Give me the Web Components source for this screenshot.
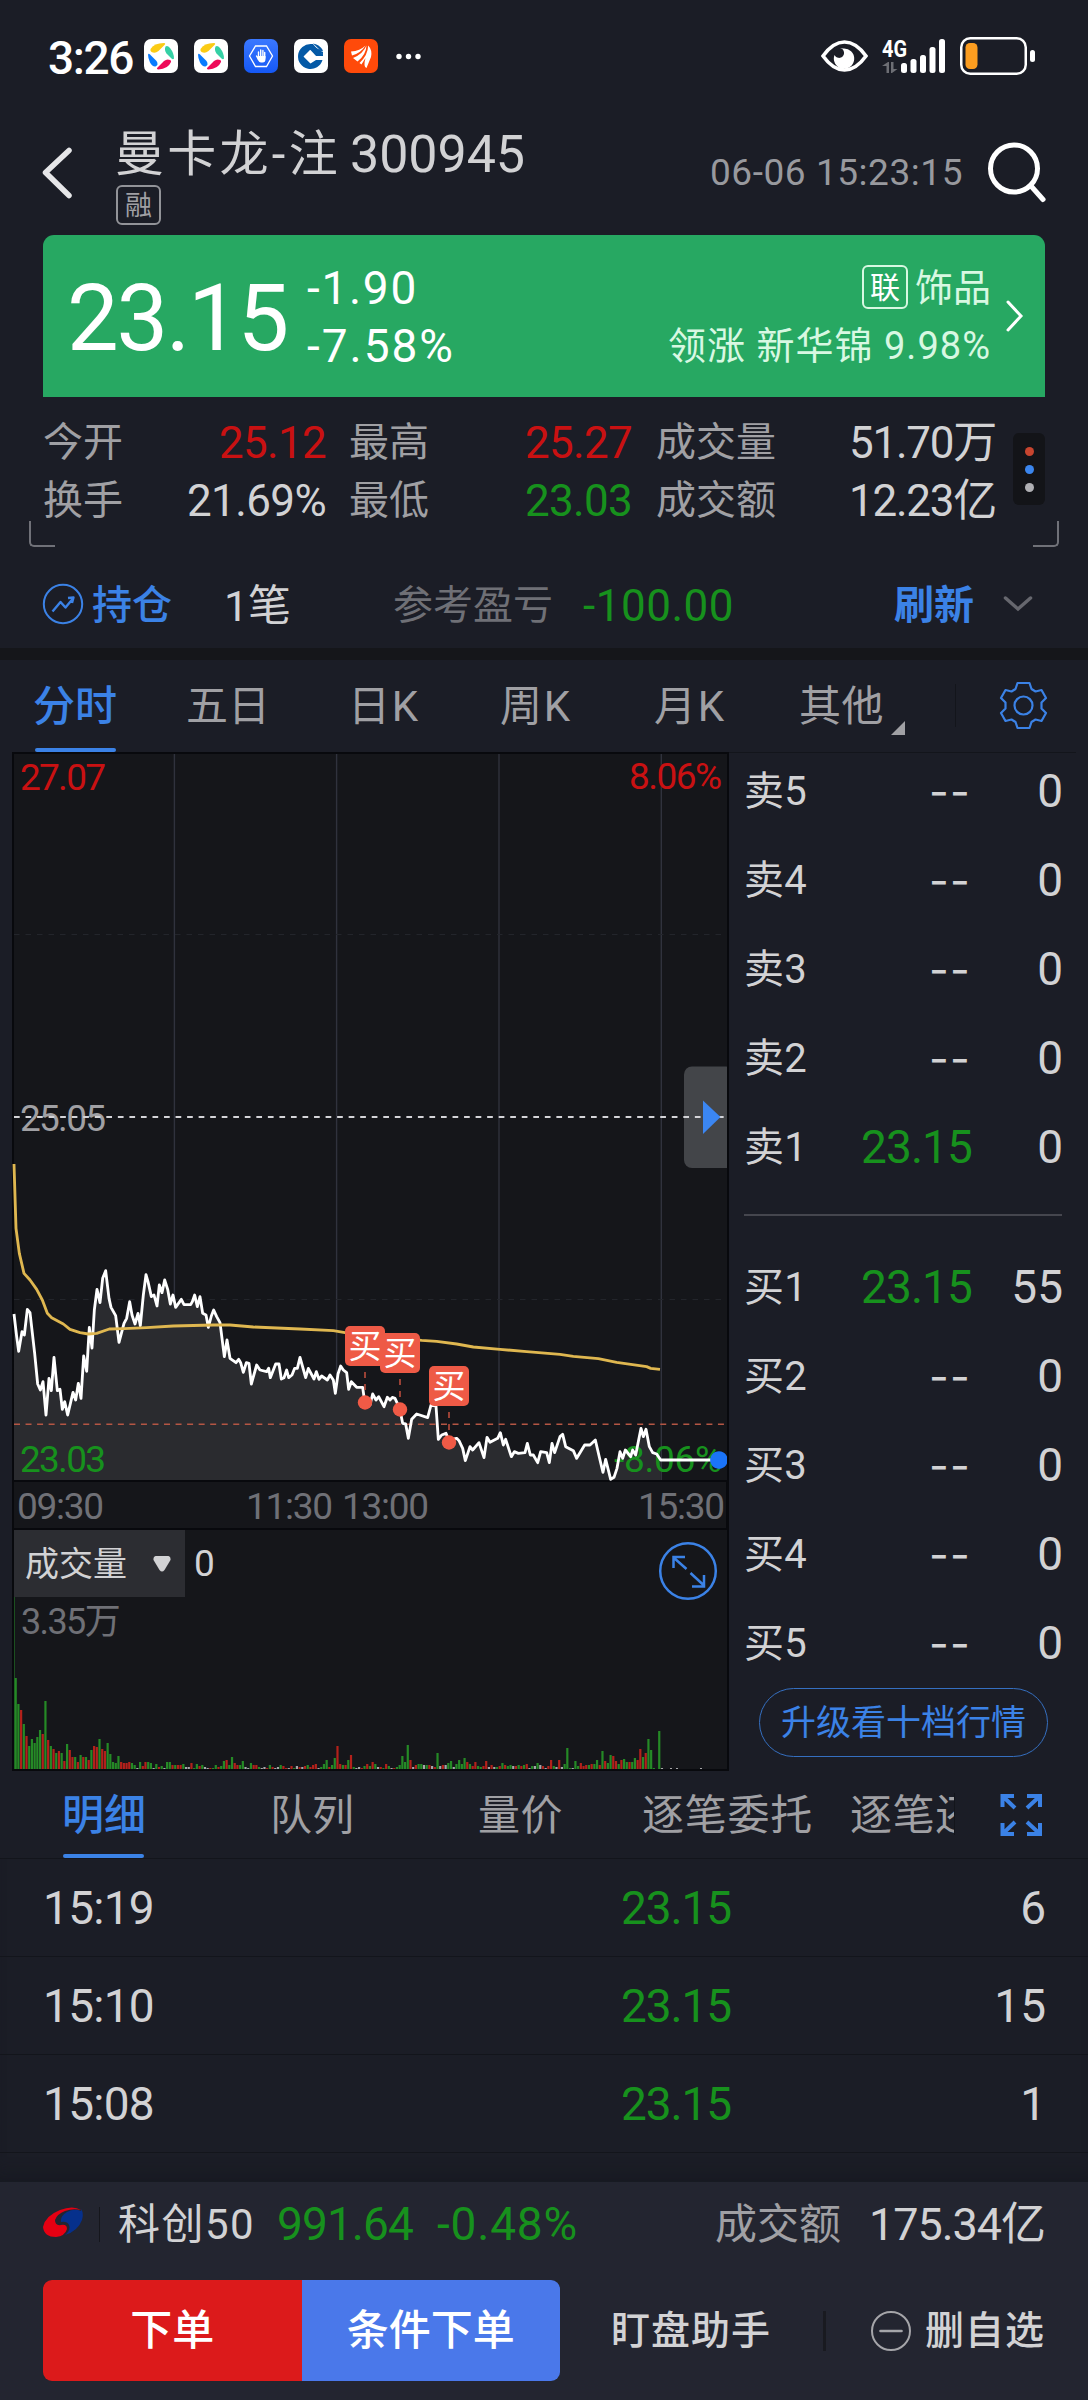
<!DOCTYPE html>
<html lang="zh-CN">
<head>
<meta charset="utf-8">
<title>曼卡龙 300945</title>
<style>
	body {
		margin: 0;
		background: #1b1d26;
	}
</style>
</head>
<body>
<stock-app></stock-app>

<script>
const base = `
	:host { display: block; box-sizing: border-box; }
	* { box-sizing: border-box; }
	svg { display: block; flex: none; }
	.up { color: #c91112; }
	.down { color: #17911d; }
`;

class Block extends HTMLElement {
	constructor() {
		super();
		this.attachShadow({ mode: 'open' });
	}

	connectedCallback() {
		this.shadowRoot.innerHTML = `<style>${base}${this.styles()}</style>${this.markup()}`;
	}

	styles() {
		return '';
	}

	markup() {
		return '<slot></slot>';
	}
}

class StockApp extends Block {
	styles() {
		return `
		:host {
			width: 1088px;
			height: 2400px;
			overflow: hidden;
			display: flex;
			flex-direction: column;
			background: #1b1d26;
			color: #d2d2d4;
			font-family: Roboto, "Noto Sans CJK SC", sans-serif;
			white-space: nowrap;
			--blue: #3b82e6;
			--muted: #a0a0a4;
			--dim: #6f7076;
			--line: #13151b;
		}
		.band { height: 12px; background: #15161a; flex: none; }
		.main {
			display: grid;
			grid-template-columns: 717px 1fr;
			height: 1019px;
			padding-left: 12px;
			flex: none;
		}
		`;
	}

	markup() {
		return `
		<status-bar></status-bar>
		<stock-header></stock-header>
		<quote-banner></quote-banner>
		<quote-stats></quote-stats>
		<holding-bar></holding-bar>
		<div class="band"></div>
		<period-tabs></period-tabs>
		<div class="main">
			<div>
				<minute-chart></minute-chart>
				<volume-chart></volume-chart>
			</div>
			<order-book></order-book>
		</div>
		<detail-tabs></detail-tabs>
		<trade-list></trade-list>
		<app-footer></app-footer>
		`;
	}
}

class StatusBar extends Block {
	styles() {
		return `
		:host {
			display: flex;
			align-items: center;
			height: 112px;
			flex: none;
			padding: 0 53px 0 48px;
			color: #fff;
		}
		.time { font-size: 46px; font-weight: 500; line-height: 60px; margin-top: 3px; }
		.apps { display: flex; gap: 16px; margin-left: 11px; }
		.more { margin-left: 17px; }
		.eye { margin-left: auto; }
		.signal { margin-left: 14px; }
		.battery { margin-left: 14px; }
		`;
	}

	markup() {
		const pinwheel = `
		<svg width="34" height="34" viewBox="0 0 34 34">
			<rect width="34" height="34" rx="7" fill="#fff"/>
			<path d="M6.500 10Q10 4 20 4Q22 4 20.500 6L14.500 12Q11 15 7.500 13Q6 12 6.500 10z" fill="#fbcb14"/>
			<path d="M21.500 7.500Q23.500 6 26 9Q30 14 30 19.500Q29 21 27.500 19.500L22.500 14.500Q20 11 21.500 7.500z" fill="#35d0a5"/>
			<path d="M4 15.500Q4.500 14 6 15.500L12.500 22Q15 26 11.500 27.500Q8.500 28 6 23.500Q4 19 4 15.500z" fill="#0a7bff"/>
			<path d="M27 23Q24 30 14.500 30.500Q12 30 13.500 28.500L20 22Q23 19.500 26 21Q27.500 21.500 27 23z" fill="#ee0a58"/>
		</svg>`;
		return `
		<fit-text class="time" w="85">3:26</fit-text>
		<div class="apps">
			${pinwheel}
			${pinwheel}
			<svg width="34" height="34" viewBox="0 0 34 34">
				<defs><linearGradient id="b" x2="0" y2="1"><stop stop-color="#3b78ff"/><stop offset="1" stop-color="#1558f5"/></linearGradient></defs>
				<rect width="34" height="34" rx="7" fill="url(#b)"/>
				<path d="M11.500 7h11L28.500 17l-6 10.500h-11L5.500 17z" fill="none" stroke="#fff" stroke-width="1.300"/>
				<path d="M14.500 19v-6M16.700 18v-7M18.900 18v-6.500M20.700 19v-5.500M12.500 17l2 3.500" stroke="#fff" stroke-width="1.400" stroke-linecap="round"/>
				<path d="M13.500 17h8v3q0 3.500-3 3.500h-1.500q-2 0-3.500-3.500z" fill="#fff"/>
			</svg>
			<svg width="34" height="34" viewBox="0 0 34 34">
				<rect width="34" height="34" rx="7" fill="#fff"/>
				<path d="M17 5A12.500 12.500 0 1 0 28.500 21H22L16.500 24.500L9.500 17.500L16 11H24L19 5z" fill="#0459a6"/>
				<path d="M19 4.500Q25 5 29 11.500L27.500 12.500zM20 10L28.500 15L26 17H29V13L21 8z" fill="#0459a6"/>
				<path d="M16 10.500H26L29 17H22z" fill="#0459a6"/>
				<path d="M16 11.500l6 6l-6 6l-6-6z" fill="#fff"/>
			</svg>
			<svg width="34" height="34" viewBox="0 0 34 34">
				<rect width="34" height="34" rx="7" fill="#ff4a0a"/>
				<path d="M7 12.500Q16 12 21.500 6.500Q17 14 8 16.500z" fill="#fff"/>
				<path d="M9 19Q19 15 22.500 6.500Q22 16 13.500 22.500z" fill="#fff"/>
				<path d="M15.500 24Q24 16 24.200 6.500Q28.500 11 27 18L22.500 29Q19 28 21.500 19Q19 23 17.500 25.500z" fill="#fff"/>
			</svg>
		</div>
		<svg class="more" width="28" height="34" viewBox="0 0 28 34" fill="#fff">
			<circle cx="4" cy="17.500" r="2.700"/><circle cx="13.500" cy="17.500" r="2.700"/><circle cx="23" cy="17.500" r="2.700"/>
		</svg>
		<svg class="eye" width="47" height="34" viewBox="0 0 47 34">
			<path d="M2 17Q12 3 23.500 3T45 17Q35 31 23.500 31T2 17z" fill="none" stroke="#fff" stroke-width="3.600"/>
			<path d="M22 9.500A10.200 10.200 0 1 1 13.500 16A5 5 0 1 0 19 9z" fill="#fff"/>
		</svg>
		<svg class="signal" width="64" height="38" viewBox="0 0 64 38" fill="#fff">
			<text x="0" y="19.500" font-size="23" font-weight="700" textLength="25" lengthAdjust="spacingAndGlyphs">4G</text>
			<path d="M0 29l6-4h1v11h-2.500v-7zM9 25h2.500v7h4l-5.500 4H9z" fill="#6d6e74"/>
			<rect x="19" y="26" width="6" height="10" rx="2.500"/>
			<rect x="28.500" y="22" width="6" height="14" rx="2.500"/>
			<rect x="38" y="18" width="6" height="18" rx="2.500"/>
			<rect x="47.500" y="10" width="6" height="26" rx="2.500"/>
			<rect x="57" y="2" width="6" height="34" rx="2.500"/>
		</svg>
		<svg class="battery" width="75" height="38" viewBox="0 0 75 38">
			<rect x="1.250" y="1.250" width="64.500" height="35.500" rx="9" fill="none" stroke="#fff" stroke-width="2.500"/>
			<rect x="5.500" y="6" width="12" height="26" rx="4.500" fill="#fc9d20"/>
			<rect x="70" y="13" width="5" height="12" rx="2.500" fill="#fff"/>
		</svg>
		`;
	}
}

class StockHeader extends Block {
	styles() {
		return `
		:host {
			display: flex;
			height: 123px;
			flex: none;
			padding-left: 41px;
			padding-right: 42px;
		}
		.back { margin-top: 34px; }
		.name { margin-left: 38px; padding-top: 13px; }
		.title { display: flex; font-size: 49px; line-height: 60px; gap: 9px; }
		.code { font-size: 52px; }
		.tag {
			width: 45px;
			height: 40px;
			margin: 0 0 0 1px;
			border: 2px solid #929398;
			border-radius: 6px;
			font-size: 27px;
			line-height: 38px;
			text-align: center;
			color: var(--muted);
		}
		.date { margin: 31px 0 0 auto; font-size: 37px; line-height: 60px; color: #98999e; }
		.search { margin: 29px 0 0 23px; }
		`;
	}

	markup() {
		return `
		<svg class="back" width="36" height="54" viewBox="0 0 36 54">
			<path d="M28 4.500L4.500 26.500L28 49.500" fill="none" stroke="#e6e6e8" stroke-width="5.500" stroke-linecap="round" stroke-linejoin="round"/>
		</svg>
		<div class="name">
			<div class="title"><fit-text w="226">曼卡龙-注</fit-text><fit-text class="code" w="175">300945</fit-text></div>
			<div class="tag">融</div>
		</div>
		<fit-text class="date" w="253">06-06 15:23:15</fit-text>
		<svg class="search" width="60" height="62" viewBox="0 0 60 62" fill="none" stroke="#fff" stroke-width="5" stroke-linecap="round">
			<circle cx="28" cy="27.500" r="23.500"/>
			<path d="M45 45L57 58.500"/>
		</svg>
		`;
	}
}

class QuoteBanner extends Block {
	styles() {
		return `
		:host {
			display: flex;
			height: 162px;
			flex: none;
			margin: 0 43px;
			padding: 20px 21px 0 24px;
			border-radius: 11px 11px 0 0;
			background: #27a862;
			color: #fff;
		}
		.price { font-size: 92px; line-height: 128px; }
		.diff { margin-left: 20px; font-size: 46px; line-height: 58px; padding-top: 4px; }
		.diff fit-text { display: block; }
		.sector { margin-left: auto; text-align: right; font-size: 38px; line-height: 58px; padding-top: 4px; color: #d8f8e2; }
		.row { display: flex; justify-content: flex-end; align-items: center; gap: 7px; height: 58px; }
		.tag {
			width: 46px;
			height: 44px;
			margin-top: -2px;
			border: 2px solid #d8f8e2;
			border-radius: 6px;
			font-size: 30px;
			line-height: 41px;
			text-align: center;
			color: #fff;
		}
		.arrow { margin: 44px 0 0 15px; }
		`;
	}

	markup() {
		return `
		<fit-text class="price" w="220">23.15</fit-text>
		<div class="diff">
			<fit-text w="111">-1.90</fit-text>
			<fit-text w="148">-7.58%</fit-text>
		</div>
		<div class="sector">
			<div class="row"><span class="tag">联</span><span>饰品</span></div>
			<div class="row"><fit-text w="323">领涨 新华锦 9.98%</fit-text></div>
		</div>
		<svg class="arrow" width="18" height="34" viewBox="0 0 18 34">
			<path d="M2 3L15 17L2 31" fill="none" stroke="#fff" stroke-width="3" stroke-linecap="round"/>
		</svg>
		`;
	}
}

class QuoteStats extends Block {
	styles() {
		return `
		:host { position: relative; height: 151px; flex: none; padding: 17px 43px 0; display: flex; }
		.grid {
			display: grid;
			grid-template-columns: 92px 191px 23px 92px 191px 24px 136px 204px;
			grid-auto-rows: 58px;
			line-height: 58px;
			font-size: 40px;
		}
		dt { color: var(--muted); }
		dd { margin: 0; font-size: 44px; text-align: right; }
		.menu {
			width: 32px;
			height: 72px;
			margin: 19px 0 0 17px;
			border-radius: 6px;
			background: #131418;
			display: flex;
			flex-direction: column;
			align-items: center;
			justify-content: center;
			gap: 9px;
		}
		.menu i { width: 9px; height: 9px; border-radius: 50%; background: #b0b0b4; }
		.menu i:nth-child(1) { background: #c8452f; }
		.menu i:nth-child(2) { background: #3b86ee; }
		.corner {
			position: absolute;
			bottom: 1px;
			width: 26px;
			height: 26px;
			border: solid #707178;
			border-width: 0 0 2.500px 2.500px;
			border-radius: 0 0 0 5px;
			left: 29px;
		}
		.corner.right { left: auto; right: 29px; transform: scaleX(-1); }
		`;
	}

	markup() {
		return `
		<div class="grid">
			<dt>今开</dt><dd class="up"><fit-text w="107">25.12</fit-text></dd><i></i>
			<dt>最高</dt><dd class="up"><fit-text w="107">25.27</fit-text></dd><i></i>
			<dt>成交量</dt><dd><fit-text w="147">51.70万</fit-text></dd>
			<dt>换手</dt><dd><fit-text w="139">21.69%</fit-text></dd><i></i>
			<dt>最低</dt><dd class="down"><fit-text w="107">23.03</fit-text></dd><i></i>
			<dt>成交额</dt><dd><fit-text w="147">12.23亿</fit-text></dd>
		</div>
		<div class="menu"><i></i><i></i><i></i></div>
		<span class="corner"></span>
		<span class="corner right"></span>
		`;
	}
}

class HoldingBar extends Block {
	styles() {
		return `
		:host {
			display: flex;
			align-items: center;
			height: 100px;
			flex: none;
			padding: 12px 55px 0 42px;
			font-size: 40px;
			line-height: 60px;
		}
		span, fit-text { padding-top: 3px; }
		.hold { margin-left: 8px; color: var(--blue); font-weight: 500; }
		.count { margin-left: 52px; font-size: 43px; }
		.label { margin-left: 102px; color: var(--dim); }
		.value { margin-left: 30px; font-size: 44px; }
		.refresh { margin-left: auto; margin-right: 29px; color: var(--blue); font-weight: 700; }
		`;
	}

	markup() {
		return `
		<svg width="42" height="42" viewBox="0 0 42 42" fill="none" stroke="#3b82e6" stroke-width="2">
			<circle cx="21" cy="21" r="19.200"/>
			<path d="M10.500 28.500L18.500 19L23.500 24.500L31 15.500M26 15L31.500 14.500L30 20" stroke-width="2.400" stroke-linejoin="round"/>
		</svg>
		<span class="hold">持仓</span>
		<fit-text class="count" w="67">1笔</fit-text>
		<span class="label">参考盈亏</span>
		<fit-text class="value down" w="151">-100.00</fit-text>
		<span class="refresh">刷新</span>
		<svg width="30" height="18" viewBox="0 0 30 18">
			<path d="M2.500 3L15 14L27.500 3" fill="none" stroke="#66676e" stroke-width="3.500" stroke-linecap="round"/>
		</svg>
		`;
	}
}

class PeriodTabs extends Block {
	styles() {
		return `
		:host { display: flex; height: 92px; flex: none; padding-left: 33px; font-size: 42px; line-height: 94px; color: var(--muted); }
		.tab { flex: none; width: 153px; }
		.tab.k { width: auto; }
		.active { color: var(--blue); font-weight: 500; }
		.active::after { content: ""; display: block; width: 81px; height: 4px; margin: -6px 0 0 2px; border-radius: 2px; background: var(--blue); }
		.other { display: flex; width: 156px; }
		.other::after {
			content: "";
			margin: 61px 0 0 7px;
			width: 14px;
			height: 14px;
			background: var(--muted);
			clip-path: polygon(100% 0, 100% 100%, 0 100%);
		}
		.gear { margin: 21px 0 0 43px; }
		.sep { width: 1px; height: 43px; margin-top: 24px; background: var(--line); }
		`;
	}

	markup() {
		const side = 'L8 -16.500L12 -14L18 -15.500L22.500 -7.500L18 -3V3L22.500 7.500L18 15.500L12 14L8 16.500L6 22.500';
		return `
		<span class="tab active">分时</span>
		<span class="tab">五日</span>
		<fit-text class="tab k" style="margin-left:9px;margin-right:80px" w="72">日K</fit-text>
		<fit-text class="tab k" style="margin-right:82px" w="72">周K</fit-text>
		<fit-text class="tab k" style="margin-right:73px" w="72">月K</fit-text>
		<span class="tab other"><fit-text w="85">其他</fit-text></span>
		<span class="sep"></span>
		<svg class="gear" width="49" height="49" viewBox="-24.500 -24.500 49 49" fill="none" stroke="#3b82e6" stroke-width="2.200" stroke-linejoin="round">
			<path d="M-6 -22.500H6${side}H-6L-8 16.500L-12 14L-18 15.500L-22.500 7.500L-18 3V-3L-22.500 -7.500L-18 -15.500L-12 -14L-8 -16.500z"/>
			<circle r="9"/>
		</svg>
		`;
	}
}

// both series are stored in thirds of a pixel, origin (0, 1150)
const PRICE = `42,492 50,560 56,604 66,545 73,555 82,478 90,488 104,610 113,702 121,720 129,695 138,795 147,685 154,722
162,622 172,722 180,718 187,778 194,755 203,795 219,727 227,750 235,700 243,745 251,618 260,664 268,532 276,594 283,480
291,418 300,458 308,385 317,362 327,445 333,472 347,497 357,577 372,520 380,505 389,455 396,495 405,522 414,490 421,527
430,435 438,374 444,395 454,440 462,435 471,468 478,405 486,428 494,390 503,418 511,462 519,435 527,472 544,448 552,464
572,464 577,455 584,435 592,470 600,440 608,490 618,495 625,532 634,498 641,480 650,500 660,518 673,620 681,570 690,625
708,638 716,628 722,638 730,667 739,638 747,640 754,702 770,645 780,660 800,665 806,655 811,683 827,642 837,642 844,687
852,683 860,660 866,683 876,675 884,655 892,655 900,622 917,683 925,655 942,687 949,665 957,688 965,678 982,690 990,675
1000,690 1006,730 1014,672 1022,648 1030,660 1040,668 1046,718 1054,695 1070,712 1088,712 1094,755 1110,765 1118,732
1128,750 1136,740 1152,770 1162,742 1170,750 1177,742 1185,745 1192,760 1200,780 1208,820 1217,822 1225,865 1235,808
1250,792 1283,803 1293,765 1308,768 1315,868 1325,855 1338,850 1346,870 1370,865 1377,872 1388,895 1396,932 1410,890
1418,900 1437,878 1452,923 1461,862 1470,877 1493,865 1501,848 1510,885 1517,868 1534,920 1543,905 1555,910 1575,908
1582,880 1591,915 1600,915 1613,938 1622,905 1640,908 1648,938 1656,880 1664,908 1680,860 1688,853 1697,890 1720,902
1730,925 1754,885 1770,885 1786,870 1800,930 1809,967 1817,928 1832,988 1842,982 1851,955 1860,905 1868,925 1876,900
1892,920 1898,900 1907,915 1923,835 1930,860 1938,838 1948,890 1958,908 1970,912 1982,930`;

const AVERAGE = `42,42 48,235 58,310 72,370 90,390 110,418 127,450 142,490 155,503 190,522 210,538 240,548 265,552 290,550
328,537 372,536 440,533 520,528 640,525 690,525 760,531 900,537 1000,542 1035,548 1265,571 1310,574 1370,582 1420,591
1500,598 1580,605 1680,613 1720,619 1795,626 1850,637 1940,650 1952,655 1980,658`;

const BUYS = [
	{ x: 365, box: 1326, y: 1402.5 },
	{ x: 400, box: 1333, y: 1409.5 },
	{ x: 449, box: 1366, y: 1442.5 }
];

class MinuteChart extends Block {
	styles() {
		return `
		text { font-size: 37px; }
		.red { fill: #c91112; }
		.green { fill: #17911d; }
		.mid { fill: #a0a0a4; }
		.time { fill: #6f7076; }
		.buy { font-size: 33px; fill: #fff; }
		`;
	}

	markup() {
		const vlines = [174.4, 336.6, 499, 661.3].map((x) => `<path d="M${x} 754V1480" stroke="#30323d" stroke-width="1.400"/>`).join('');
		const buys = BUYS.map((b) => `
			<path d="M${b.x} ${b.box + 46}V${b.y}" stroke="#c5503f" stroke-width="1.500" stroke-dasharray="6 6"/>
			<circle cx="${b.x}" cy="${b.y}" r="7.200" fill="#f05a46"/>
			<rect x="${b.x - 20}" y="${b.box}" width="40" height="40" rx="5" fill="#ee5a46"/>
			<text class="buy" x="${b.x}" y="${b.box + 32}" text-anchor="middle">买</text>
		`).join('');
		return `
		<svg width="717" height="778" viewBox="12 752 717 778">
			<rect x="12" y="752" width="717" height="778" fill="#08090d"/>
			<rect x="14" y="754" width="713" height="726" fill="#15161a"/>
			<rect x="14" y="1482" width="712" height="46" fill="#15161a"/>
			${vlines}
			<path d="M14 934.500H727M14 1299.500H727" stroke="#23252b" stroke-dasharray="5.500 6"/>
			<g transform="translate(0 1150) scale(.333333)">
				<polygon points="42,990 ${PRICE} 1982,990" fill="#2a2b2f"/>
			</g>
			<text class="red" x="20" y="789.500" textLength="86">27.07</text>
			<text class="red" x="629" y="789" textLength="93">8.06%</text>
			<text class="mid" x="20" y="1131" textLength="86">25.05</text>
			<text class="green" x="20" y="1472" textLength="86">23.03</text>
			<text class="green" x="614" y="1472" textLength="108">-8.06%</text>
			<rect x="684" y="1066.500" width="50" height="101.500" rx="8" fill="#434549"/>
			<rect x="727" y="1060" width="2" height="115" fill="#08090d"/>
			<path d="M14 1117H727" stroke="#d4d4d8" stroke-width="2" stroke-dasharray="5.700 5.840"/>
			<path d="M703 1100.500V1134L720.500 1117z" fill="#3b86f2"/>
			<path d="M14 1424.200H727" stroke="#b45644" stroke-width="1.600" stroke-dasharray="6 5.540"/>
			<g transform="translate(0 1150) scale(.333333)" fill="none" stroke-linejoin="round">
				<polyline points="${PRICE} 2160,930" stroke="#fff" stroke-width="8.500"/>
				<polyline points="${AVERAGE}" stroke="#dfb750" stroke-width="8.500"/>
			</g>
			${buys}
			<path d="M727 1456.500V1463.500A8.800 8.800 0 1 1 727 1456.500z" fill="#1b74f8"/>
			<text class="time" x="17" y="1519" textLength="87">09:30</text>
			<text class="time" x="246" y="1519" textLength="87">11:30</text>
			<text class="time" x="342" y="1519" textLength="87">13:00</text>
			<text class="time" x="638" y="1519" textLength="87">15:30</text>
		</svg>
		`;
	}
}

// one bar per minute: colour (g, r, w) and height
const VOLUME = `g91 g65 r59 g45 r33 g23 g30 g26 g32 g39 r35 g68 r29 g23 r20 g16 r18 g16 r8 g25 r19 r12 g12 r7 g14 r12 g12 r9 g19 r23
r22 g30 r20 r18 g26 g15 g7 g6 g13 r7 r6 r6 r7 g6 g4 w1 g7 r3 r7 g7 g6 w1 g5 r2 g3 w1 g7 g7 r4 g4
r4 r4 g5 w2 w2 r6 g1 g5 r3 g4 w2 w1 r1 g1 g4 r2 g3 g8 r9 g4 g12 r6 r4 g4 g8 w2 w1 g6 r4 r4
g2 w1 w2 r1 g4 r2 w1 w2 g4 r3 r1 w1 r3 g1 w3 r2 w2 r3 g4 r2 r4 r5 w1 g2 g5 g9 r2 g4 g11 r23
r5 g4 r4 g9 r14 g2 w1 w2 r1 g3 r5 g3 r7 g5 w2 r2 g1 r5 g3 w1 r1 g2 g4 g13 g7 g24 r9 w2 r4 g5
g5 w4 g4 r4 w3 r2 g16 w3 r4 w4 g6 g8 w2 g5 g9 g5 g11 r7 g5 r3 r7 g3 g2 r3 r8 w2 r4 w2 g2 r3
g6 r4 g3 g4 w3 r3 g4 r3 g4 r5 w1 g3 w3 g6 w4 r3 w1 r3 r9 g3 w2 r9 w2 g5 g21 g1 w1 g8 g3 r6
r3 r4 g4 r5 g5 g9 r4 g18 r8 g6 g14 r13 r8 g5 r9 g10 g7 r7 g7 g11 r9 r20 g12 r16 g30 g19 g1 w0 g38 w1`;

class VolumeChart extends Block {
	styles() {
		return `
		:host { position: relative; height: 241px; background: #15161a; border: 2px solid #08090d; border-top: 0; }
		.head { display: flex; height: 67px; line-height: 68px; font-size: 37px; }
		.kind { display: flex; align-items: center; justify-content: space-between; width: 171px; padding: 0 14px 0 11px; background: #2c2d32; font-size: 34px; }
		.now { margin-left: 9px; }
		.expand { margin: 11px 9px 0 auto; }
		.max { padding-left: 7px; font-size: 36px; line-height: 51px; color: var(--dim); }
		.bars { position: absolute; left: 0; bottom: 0; }
		`;
	}

	markup() {
		const colors = { g: '#258a26', r: '#b3211b', w: '#a5a5a8' };
		const bars = VOLUME.split(/\s+/).map((item, i) => {
			const h = +item.slice(1);
			return `<rect x="${(0.6 + i * 2.704).toFixed(2)}" y="${172 - h}" width="2.200" height="${h}" fill="${colors[item[0]]}"/>`;
		}).join('');
		return `
		<svg class="bars" width="713" height="172" viewBox="0 0 713 172">
			<rect width="1" height="172" fill="#1c4f20"/>
			${bars}
			<path d="M656 171.500h2M662 171.500h2M686 171.500h2" stroke="#a5a5a8"/>
		</svg>
		<div class="head">
			<div class="kind">成交量
				<svg width="18" height="16" viewBox="0 0 18 16"><path d="M2.500 0H15.500Q18 .5 17.500 4L11.500 14Q9 17 6.500 14L.5 4Q0 .5 2.500 0z" fill="#d2d2d4"/></svg>
			</div>
			<span class="now">0</span>
			<svg class="expand" width="60" height="60" viewBox="0 0 60 60" fill="none" stroke="#3b82e6" stroke-width="2.500">
				<circle cx="30" cy="30" r="27.800"/>
				<path d="M28.500 28L15.500 16.500M15.500 27V16H27M32.500 32L46 44.500M46 34V45.500H34"/>
			</svg>
		</div>
		<fit-text class="max" w="98">3.35万</fit-text>
		`;
	}
}

class OrderRow extends Block {
	styles() {
		return `
		:host { display: grid; grid-template-columns: 1fr 110px 92px; height: 89px; line-height: 89px; font-size: 40px; }
		.price, .qty { text-align: right; font-size: 46px; }
		.none { font-family: Inter, sans-serif; font-size: 43px; }
		`;
	}

	markup() {
		const price = this.getAttribute('price');
		return `
		<fit-text w="63">${this.getAttribute('label')}</fit-text>
		${price
			? `<span class="price down"><fit-text w="111">${price}</fit-text></span>`
			: '<span class="price none"><fit-text w="42">--</fit-text></span>'}
		<span class="qty">${this.getAttribute('qty')}</span>
		`;
	}
}

class OrderBook extends Block {
	styles() {
		return `
		:host { padding: 0 13px 0 15px; border-top: 1px solid var(--line); margin-right: 12px; }
		.sells { margin-top: -6px; }
		hr { height: 2px; margin: 22px 1px 27px 0; border: 0; background: #45464e; }
		.upgrade {
			width: 289px;
			height: 69px;
			margin: 0 0 0 15px;
			border: 1.500px solid #356fc0;
			border-radius: 35px;
			font-size: 35px;
			line-height: 69px;
			text-align: center;
			color: var(--blue);
		}
		`;
	}

	markup() {
		const row = ([label, qty, price]) => `<order-row label="${label}" qty="${qty}" ${price ? `price="${price}"` : ''}></order-row>`;
		const sells = [['卖5', 0], ['卖4', 0], ['卖3', 0], ['卖2', 0], ['卖1', 0, '23.15']];
		const buys = [['买1', 55, '23.15'], ['买2', 0], ['买3', 0], ['买4', 0], ['买5', 0]];
		return `
		<div class="sells">${sells.map(row).join('')}</div>
		<hr>
		<div>${buys.map(row).join('')}</div>
		<div class="upgrade">升级看十档行情</div>
		`;
	}
}

class DetailTabs extends Block {
	styles() {
		return `
		:host {
			display: flex;
			height: 88px;
			flex: none;
			padding-left: 62px;
			border-bottom: 1px solid var(--line);
			font-size: 42px;
			line-height: 90px;
			color: var(--muted);
		}
		.tab { flex: none; width: 208px; }
		.active { color: var(--blue); font-weight: 500; }
		.active::after { content: ""; display: block; width: 81px; height: 4px; margin: -7px 0 0 1px; border-radius: 2px; background: var(--blue); }
		.wide { margin-left: -44px; }
		.cut { width: 104px; overflow: hidden; }
		.sep { width: 1px; height: 42px; margin: 22px 0 0; background: var(--line); }
		svg { margin: 21px 0 0 43px; }
		`;
	}

	markup() {
		return `
		<span class="tab active">明细</span>
		<span class="tab">队列</span>
		<span class="tab"><fit-text w="85">量价</fit-text></span>
		<span class="tab wide"><fit-text w="171">逐笔委托</fit-text></span>
		<span class="tab cut"><fit-text w="171">逐笔还原</fit-text></span>
		<span class="sep"></span>
		<svg width="46" height="46" viewBox="0 0 46 46" fill="none" stroke="#3b82e6" stroke-width="4">
			<path d="M4.500 15V4H16M4.500 4L17 16M29 4H42V15M42 4L29 16M4.500 31V42H16M4.500 42L17 30M29 42H42V31M42 42L29 30"/>
		</svg>
		`;
	}
}

class TradeList extends Block {
	styles() {
		return `
		:host { height: 323px; flex: none; overflow: hidden; background: #1b1d26; box-shadow: inset 0 -18px 16px -12px #171921; }
		.row {
			display: grid;
			grid-template-columns: 360px 328px 1fr;
			height: 98px;
			padding: 0 42px 0 43px;
			border-bottom: 1px solid var(--line);
			font-size: 46px;
			line-height: 99px;
		}
		.price, .qty { text-align: right; }
		`;
	}

	markup() {
		return [['15:19', '23.15', 6], ['15:10', '23.15', 15], ['15:08', '23.15', 1]].map(([time, price, qty]) => `
		<div class="row">
			<fit-text w="111">${time}</fit-text>
			<span class="price down"><fit-text w="110">${price}</fit-text></span>
			<span class="qty">${qty}</span>
		</div>
		`).join('');
	}
}

class AppFooter extends Block {
	styles() {
		return `
		:host { height: 218px; flex: none; padding: 0 43px; background: #232530; }
		.index { display: flex; align-items: center; height: 84px; font-size: 42px; line-height: 87px; }
		.sep { width: 1px; height: 35px; margin: 0 18px 0 16px; background: #15161c; }
		.num { font-size: 46px; }
		.change { margin-left: 24px; }
		.amount { margin-left: auto; margin-right: 28px; color: var(--muted); }
		.turnover { font-size: 45px; }
		.actions { display: flex; align-items: center; height: 101px; margin-top: 14px; font-size: 39px; font-weight: 500; }
		.button { width: 260px; line-height: 102px; height: 101px; text-align: center; color: #fff; font-size: 42px; }
		.order { background: #dc1a1b; border-radius: 9px 0 0 9px; }
		.cond { background: #4a78ea; border-radius: 0 9px 9px 0; }
		.help { margin-left: 51px; line-height: 104px; }
		.bar { width: 3px; height: 40px; margin-left: 52px; background: #191a20; }
		.minus { margin-left: 44px; }
		.remove { margin-left: 13px; line-height: 104px; }
		`;
	}

	markup() {
		return `
		<div class="index">
			<svg width="40" height="36" viewBox="0 0 40 36">
				<path d="M38 4Q30-1 17 4Q2 10 0 21Q1 31 13 31Q22 30 24 23Q24 18 18 19Q12 20 12 14Q14 8 22 5Q30 2 38 4z" fill="#e50012"/>
				<path d="M38 3Q41 7 39 14Q35 25 22 29Q28 24 26 19Q24 15 18 16Q17 10 24 6Q31 2 38 5z" fill="#06308c"/>
			</svg>
			<span class="sep"></span>
			<fit-text w="137">科创50</fit-text>
			<fit-text class="num down" style="margin-left:22px" w="136">991.64</fit-text>
			<fit-text class="num down change" w="141">-0.48%</fit-text>
			<span class="amount">成交额</span>
			<fit-text class="turnover" w="176">175.34亿</fit-text>
		</div>
		<div class="actions">
			<span class="button order">下单</span>
			<span class="button cond">条件下单</span>
			<fit-text class="help" w="160">盯盘助手</fit-text>
			<span class="bar"></span>
			<svg class="minus" width="42" height="42" viewBox="0 0 42 42" fill="none" stroke="#a5a5a9" stroke-width="2">
				<circle cx="21" cy="21" r="19"/>
				<path d="M10.500 21H31.500" stroke-width="2.600" stroke-linecap="round"/>
			</svg>
			<fit-text class="remove" w="120">删自选</fit-text>
		</div>
		`;
	}
}

// spreads its letters so that the text is exactly w pixels wide
class FitText extends HTMLElement {
	constructor() {
		super();
		this.attachShadow({ mode: 'open' });
		this.shadowRoot.innerHTML = `
		<style>
		:host { display: inline-block; flex: none; }
		span { display: inline-block; }
		</style>
		<span><slot></slot></span>
		`;
	}

	connectedCallback() {
		const span = this.shadowRoot.querySelector('span');
		const gap = (this.getAttribute('w') - span.getBoundingClientRect().width) / this.textContent.length;
		span.style.letterSpacing = `${gap}px`;
	}
}

customElements.define('stock-app', StockApp);
customElements.define('status-bar', StatusBar);
customElements.define('stock-header', StockHeader);
customElements.define('quote-banner', QuoteBanner);
customElements.define('quote-stats', QuoteStats);
customElements.define('holding-bar', HoldingBar);
customElements.define('period-tabs', PeriodTabs);
customElements.define('minute-chart', MinuteChart);
customElements.define('volume-chart', VolumeChart);
customElements.define('order-row', OrderRow);
customElements.define('order-book', OrderBook);
customElements.define('detail-tabs', DetailTabs);
customElements.define('trade-list', TradeList);
customElements.define('app-footer', AppFooter);
customElements.define('fit-text', FitText);
</script>
</body>
</html>
